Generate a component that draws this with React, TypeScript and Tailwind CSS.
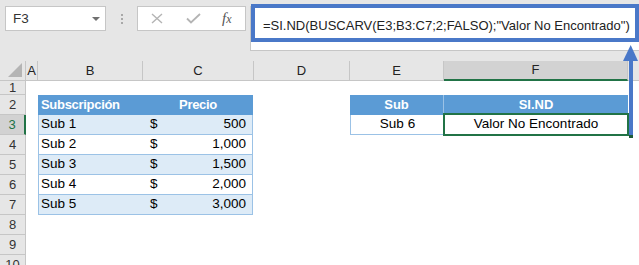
import React from "react";

const rows = [
  { name: "Sub 1", price: "500" },
  { name: "Sub 2", price: "1,000" },
  { name: "Sub 3", price: "1,500" },
  { name: "Sub 4", price: "2,000" },
  { name: "Sub 5", price: "3,000" },
];

const rowHeaderPos = [
  "col-start-1 row-start-2",
  "col-start-1 row-start-3",
  "col-start-1 row-start-4",
  "col-start-1 row-start-5",
  "col-start-1 row-start-6",
  "col-start-1 row-start-7",
  "col-start-1 row-start-8",
  "col-start-1 row-start-9",
  "col-start-1 row-start-10",
  "col-start-1 row-start-11",
];

export default function App() {
  return (
    <div className="relative w-[639px] h-[265px] overflow-hidden bg-white font-['Liberation_Sans',Arial,sans-serif] text-black">
      {/* Toolbar */}
      <div className="h-[61px] bg-[#e6e6e6] flex items-start pt-[6px] pl-[5px]">
        {/* Name box */}
        <div className="w-[101px] h-[25px] bg-white border border-[#c6c6c6] flex items-center justify-between pl-[7px] pr-[5px]">
          <span className="text-[13.5px] text-[#333] leading-none">F3</span>
          <svg width="8" height="4" viewBox="0 0 8 4">
            <polygon points="0,0 8,0 4,4" fill="#707070" />
          </svg>
        </div>
        {/* Dots */}
        <div className="w-[31px] flex justify-center pt-[8px]">
          <div className="flex flex-col gap-[2px]">
            <div className="w-[2px] h-[2px] bg-[#a8a8a8]" />
            <div className="w-[2px] h-[2px] bg-[#a8a8a8]" />
            <div className="w-[2px] h-[2px] bg-[#a8a8a8]" />
          </div>
        </div>
        {/* Buttons */}
        <div className="w-[109px] h-[25px] bg-white border border-[#c6c6c6] flex items-center">
          <svg className="ml-[13px]" width="12" height="11" viewBox="0 0 12 11">
            <path d="M1 1 L11 10 M11 1 L1 10" stroke="#b4b4b4" strokeWidth="1.4" fill="none" />
          </svg>
          <svg className="ml-[23px]" width="15" height="11" viewBox="0 0 15 11">
            <path d="M1 5.5 L5 9.5 L14 1" stroke="#b4b4b4" strokeWidth="1.8" fill="none" />
          </svg>
          <span className="ml-[21px] font-['Liberation_Serif',serif] italic text-[15px] leading-none text-[#555]">
            f<span className="text-[12px]">x</span>
          </span>
        </div>
        {/* Formula bar */}
        <div className="relative ml-[4px] flex-1 h-[45px] bg-white border-l border-b border-[#c6c6c6] pl-[12px] pt-[7px]">
          <span className="text-[13px] leading-[16px] text-[#222] whitespace-nowrap">
            =SI.ND(BUSCARV(E3;B3:C7;2;FALSO);"Valor No Encontrado")
          </span>
          <div className="absolute left-[0px] top-[-2px] w-[388px] h-[38px] border-[4px] border-[#4a78c8]" />
        </div>
      </div>

      {/* Grid */}
      <div className="grid grid-cols-[26px_12px_105px_111px_96px_94px_184px_1fr] grid-rows-[20px_14px_repeat(9,20px)] text-[13.5px]">
        {/* Column headers */}
        <div className="col-start-1 row-start-1 relative bg-[#e6e6e6] border-r border-b border-[#c6c6c6]">
          <svg className="absolute right-[3px] bottom-[3px]" width="14" height="14" viewBox="0 0 14 14">
            <polygon points="14,0 14,14 0,14" fill="#b4b4b4" />
          </svg>
        </div>
        <div className="col-start-2 row-start-1 bg-[#e6e6e6] border-r border-b border-[#c6c6c6] flex items-center justify-center text-[13px] text-[#222]">A</div>
        <div className="col-start-3 row-start-1 bg-[#e6e6e6] border-r border-b border-[#c6c6c6] flex items-center justify-center text-[13px] text-[#222]">B</div>
        <div className="col-start-4 row-start-1 bg-[#e6e6e6] border-r border-b border-[#c6c6c6] flex items-center justify-center text-[13px] text-[#222]">C</div>
        <div className="col-start-5 row-start-1 bg-[#e6e6e6] border-r border-b border-[#c6c6c6] flex items-center justify-center text-[13px] text-[#222]">D</div>
        <div className="col-start-6 row-start-1 bg-[#e6e6e6] border-r border-b border-[#c6c6c6] flex items-center justify-center text-[13px] text-[#222]">E</div>
        <div className="col-start-7 row-start-1 bg-[#d2d2d2] border-r border-[#c6c6c6] border-b-2 border-b-[#217346] flex items-center justify-center text-[13px] text-[#222]">F</div>
        <div className="col-start-8 row-start-1 bg-[#e6e6e6] border-b border-[#c6c6c6]" />

        {/* Row headers */}
        {rowHeaderPos.map((pos, i) =>
          i === 2 ? (
            <div
              key={i}
              className={`${pos} bg-[#d2d2d2] border-b border-[#c6c6c6] border-r-2 border-r-[#217346] flex items-center justify-center text-[13px] text-[#217346]`}
            >
              {i + 1}
            </div>
          ) : (
            <div
              key={i}
              className={`${pos} bg-[#e6e6e6] border-b border-r border-[#c6c6c6] flex items-center justify-center text-[13px] text-[#333]`}
            >
              {i + 1}
            </div>
          )
        )}

        {/* Table B2:C7 */}
        <div className="col-start-3 col-span-2 row-start-3 row-span-6 mr-[1px] flex flex-col">
          <div className="h-[20px] bg-[#5b9bd5] flex items-center text-white font-bold text-[13px] tracking-[-0.3px]">
            <div className="w-[105px] pl-[3px]">Subscripción</div>
            <div className="flex-1 text-center">Precio</div>
          </div>
          {rows.map((r, i) =>
            i % 2 === 0 ? (
              <div key={i} className="h-[20px] bg-[#ddebf7] border-x border-b border-[#9bc2e6] flex items-center">
                <div className="w-[104px] pl-[2px]">{r.name}</div>
                <div className="flex-1 flex justify-between pl-[7px] pr-[6px]">
                  <span>$</span>
                  <span>{r.price}</span>
                </div>
              </div>
            ) : (
              <div key={i} className="h-[20px] bg-white border-x border-b border-[#9bc2e6] flex items-center">
                <div className="w-[104px] pl-[2px]">{r.name}</div>
                <div className="flex-1 flex justify-between pl-[7px] pr-[6px]">
                  <span>$</span>
                  <span>{r.price}</span>
                </div>
              </div>
            )
          )}
        </div>

        {/* Table E2:F3 */}
        <div className="col-start-6 col-span-2 row-start-3 row-span-2 flex flex-col">
          <div className="h-[20px] bg-[#5b9bd5] flex items-center text-white font-bold text-[13px]">
            <div className="w-[94px] h-full flex items-center justify-center border-r border-[#9bc2e6]">Sub</div>
            <div className="flex-1 text-center">SI.ND</div>
          </div>
          <div className="h-[20px] bg-white border-l border-b border-[#9bc2e6] flex items-center">
            <div className="w-[93px] text-center">Sub 6</div>
            <div className="relative flex-1 h-full flex items-center justify-center">
              Valor No Encontrado
              <div className="absolute left-[-1px] top-[-2px] right-[-1px] bottom-[-2px] border-2 border-[#217346]" />
            </div>
          </div>
        </div>
      </div>

      {/* Annotation arrow */}
      <svg className="absolute left-[622px] top-[44px]" width="17" height="96" viewBox="0 0 17 96">
        <rect x="7" y="90" width="4" height="4" fill="#1e5c38" />
        <rect x="7" y="15" width="4" height="76" fill="#4a78c8" />
        <polygon points="8.7,1 1,17 16,17" fill="#4a78c8" />
      </svg>
    </div>
  );
}
